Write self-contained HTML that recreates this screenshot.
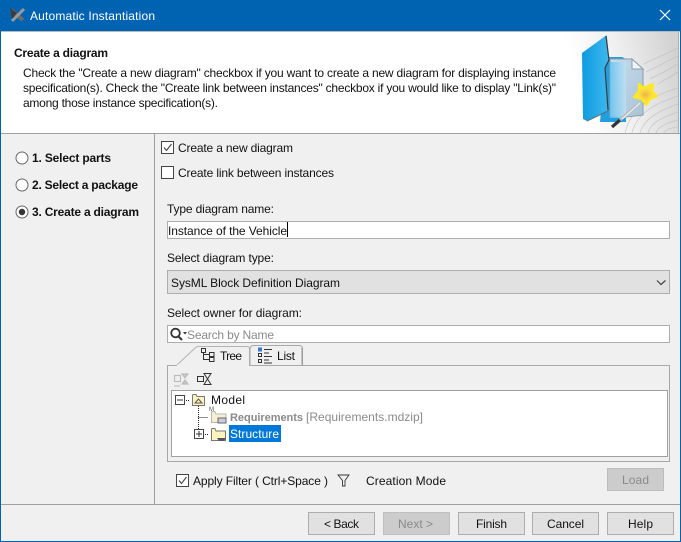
<!DOCTYPE html>
<html><head><meta charset="utf-8"><title>Automatic Instantiation</title>
<style>html,body{margin:0;padding:0;background:#f0f0f0;width:681px;height:542px;overflow:hidden}svg{display:block}
text{font-family:"Liberation Sans",sans-serif;font-size:12px;fill:#111}
.b{font-weight:bold}.g{fill:#8a8a8a}</style></head><body>
<svg width="681" height="542" viewBox="0 0 681 542" xmlns="http://www.w3.org/2000/svg">
<defs>
<linearGradient id="hg" x1="0.1" y1="0.5" x2="1" y2="0.3"><stop offset="0" stop-color="#fff"/><stop offset=".45" stop-color="#f0f0f0"/><stop offset="1" stop-color="#d2d2d2"/></linearGradient>
<linearGradient id="fg" x1="0" y1="0" x2="1" y2="0"><stop offset="0" stop-color="#0d9be0"/><stop offset="1" stop-color="#3fb8ee"/></linearGradient>
<linearGradient id="dg" x1="0" y1="0" x2="1" y2="1"><stop offset="0" stop-color="#c8dcea"/><stop offset="1" stop-color="#a9c4d8"/></linearGradient>
<linearGradient id="lg" x1="0" y1="0" x2="1" y2="0"><stop offset="0" stop-color="#5cc0f0"/><stop offset="1" stop-color="#bfe2f4"/></linearGradient>
<radialGradient id="st"><stop offset="0" stop-color="#f2b63c"/><stop offset=".6" stop-color="#fbe04a"/><stop offset="1" stop-color="#ffec20"/></radialGradient>
</defs>
<rect width="681" height="542" fill="#f0f0f0"/>
<!-- title bar -->
<rect width="681" height="31" fill="#0063b1"/>
<rect x="0" y="0" width="1" height="542" fill="#0063b1"/><rect x="680" y="0" width="1" height="542" fill="#0063b1"/><rect y="541" width="681" height="1" fill="#0063b1"/>
<path d="M11 10L23 20" stroke="#6d6d6d" stroke-width="4" fill="none"/>
<path d="M24 9L12 21" stroke="#9a9a9a" stroke-width="3" fill="none"/>
<path d="M10 8L17 13L12 19Z" fill="#3c3c3c"/>
<text x="30" y="20" style="fill:#fff" textLength="125">Automatic Instantiation</text>
<path d="M660 10L670 20M670 10L660 20" stroke="#fff" stroke-width="1.200" fill="none"/>
<!-- header -->
<rect x="1" y="31" width="679" height="1" fill="#b8b8b8"/>
<rect x="1" y="32" width="678" height="101" fill="#fff"/>
<rect x="565" y="32" width="113" height="101" fill="url(#hg)"/>
<g fill="none" stroke="#bdbdbd" stroke-width=".8" opacity=".7">
<path d="M625 133C630 112 645 98 678 88"/><path d="M632 133C636 116 650 105 678 96"/><path d="M640 133C643 121 655 112 678 104"/><path d="M648 133C650 124 660 118 678 112"/><path d="M656 133C658 127 666 123 678 120"/><path d="M664 133C665 130 670 128 678 127"/>
<path d="M644 64C656 58 668 53 678 48"/><path d="M646 72C658 66 668 61 678 56"/><path d="M650 79C660 74 670 69 678 64"/><path d="M658 84C664 80 672 76 678 72"/>
</g>
<rect x="678" y="32" width="1" height="101" fill="#b0b0b0"/>
<path d="M606 57H622L626 59V122L600 122Z" fill="#1f9fe0"/>
<path d="M610 59H632L643 69V115L626 117H610Z" fill="url(#dg)" stroke="#8d9dab"/>
<path d="M632 59L643 69H632Z" fill="#eef5fb" stroke="#8d9dab"/>
<path d="M610 62H626V118H610Z" fill="url(#lg)" opacity=".75"/>
<path d="M582 53L604 37Q607 34 607 37L609 60L605 68L608 110L587 121L583 119Z" fill="url(#fg)"/>
<path d="M606 36L609 60L605 68L608 110" fill="none" stroke="#3a3a3a" stroke-width="1.200"/>
<path d="M587 121L608 111" stroke="#5a7080" stroke-width="1" fill="none"/>
<path d="M612 127L620 120" stroke="#333" stroke-width="3.200"/><path d="M620 120L640 103" stroke="#b8b8b8" stroke-width="3"/><path d="M622 119L640 103" stroke="#eee" stroke-width="1.200"/>
<path d="M639 84L644 88L653 84L652 92L657 96L650 99L646 105L642 99L634 97L639 91Z" fill="url(#st)" stroke="#ffe818" stroke-width="2.200" stroke-linejoin="round"/>
<text class="b" x="14" y="57" textLength="94">Create a diagram</text>
<text x="23" y="77" textLength="533">Check the "Create a new diagram" checkbox if you want to create a new diagram for displaying instance</text>
<text x="23" y="92" textLength="533">specification(s). Check the "Create link between instances" checkbox if you would like to display "Link(s)"</text>
<text x="23" y="107" textLength="195">among those instance specification(s).</text>
<rect x="1" y="133" width="679" height="1" fill="#a0a0a0"/>
<rect x="154" y="134" width="1" height="370" fill="#a0a0a0"/>
<!-- steps -->
<g fill="#fff" stroke="#666"><circle cx="22" cy="158" r="6"/><circle cx="22" cy="185" r="6"/><circle cx="22" cy="212" r="6"/></g>
<circle cx="22" cy="212" r="3.200" fill="#333"/>
<text class="b" x="32" y="162" textLength="79">1. Select parts</text>
<text class="b" x="32" y="189" textLength="106">2. Select a package</text>
<text class="b" x="32" y="216" textLength="107">3. Create a diagram</text>
<!-- checkboxes -->
<rect x="161.500" y="141.500" width="12" height="12" fill="#fff" stroke="#444"/>
<path d="M164 147.500L166.500 150.500L171.500 144" fill="none" stroke="#444" stroke-width="1.100"/>
<text x="178" y="152" textLength="115">Create a new diagram</text>
<rect x="161.500" y="166.500" width="12" height="12" fill="#fff" stroke="#444"/>
<text x="178" y="177" textLength="156">Create link between instances</text>
<!-- name -->
<text x="167" y="213" textLength="107">Type diagram name:</text>
<rect x="167.500" y="221.500" width="502" height="17" fill="#fff" stroke="#adadad"/>
<text x="168" y="235" textLength="119">Instance of the Vehicle</text>
<rect x="287" y="222" width="1" height="15" fill="#000"/>
<!-- type -->
<text x="167" y="262" textLength="107">Select diagram type:</text>
<rect x="167.500" y="270.500" width="502" height="23" fill="#e1e1e1" stroke="#adadad"/>
<text x="171" y="287" textLength="169">SysML Block Definition Diagram</text>
<path d="M657 280.500L661 284.500L665.500 280.500" fill="none" stroke="#444" stroke-width="1.200"/>
<!-- owner -->
<text x="167" y="317" textLength="135">Select owner for diagram:</text>
<rect x="167.500" y="325.500" width="502" height="17" fill="#fff" stroke="#adadad"/>
<circle cx="175.500" cy="333" r="4.300" fill="none" stroke="#333" stroke-width="1.800"/>
<path d="M178.500 336.500L182 340" stroke="#333" stroke-width="2"/><path d="M183 332H187L185 334.500Z" fill="#333"/>
<text x="187" y="339" class="g" textLength="87">Search by Name</text>
<!-- tabs -->
<rect x="167.500" y="365.500" width="502" height="96" fill="#f0f0f0" stroke="#a8a8a8"/>
<path d="M176.500 365.500L195 348Q196.500 346.500 198 346.500H247Q249.500 346.500 249.500 349V365.500" fill="#f0f0f0" stroke="#b4b4b4"/>
<path d="M250 365.500V349Q250 345.500 254 345.500H299Q302.500 345.500 302.500 349V365.500Z" fill="#f0f0f0" stroke="#a8a8a8"/>
<rect x="301.500" y="348" width="1.500" height="17" fill="#9c9c9c"/>
<rect x="177" y="364.500" width="72" height="2" fill="#f0f0f0"/>
<g fill="none" stroke="#333"><rect x="201.500" y="348.500" width="4" height="4"/><rect x="209.500" y="352.500" width="4.500" height="4"/><rect x="209.500" y="357.500" width="4.500" height="4"/><path d="M203.500 353V359.500H209M203.500 354.500H209"/></g>
<text x="220" y="360" textLength="22">Tree</text>
<g fill="none" stroke="#333"><rect x="258.500" y="353.500" width="3" height="3"/><rect x="258.500" y="359.500" width="3" height="3"/><path d="M264 349.500H272M264 353H269M264 356.500H272M264 360H269M264 363H272"/></g>
<rect x="258" y="347.500" width="4" height="4" fill="#3a78c8"/>
<text x="277" y="360" textLength="18">List</text>
<!-- tree toolbar -->
<g fill="none" stroke="#bdbdbd" stroke-width="1.200"><rect x="174.500" y="375.500" width="6" height="6"/><path d="M182 374H188L185 378ZM182 384H188L185 380Z" fill="#c4c4c4"/><path d="M174 386H180"/></g>
<g fill="none" stroke="#333"><rect x="197.500" y="376.500" width="6" height="5"/><path d="M204 373.500H211L207.500 379L211 384.500H204L207.500 379Z"/></g>
<!-- tree -->
<rect x="171.500" y="390.500" width="496" height="66" fill="#fff" stroke="#a0a0a0"/>
<rect x="175.500" y="395.500" width="9" height="9" fill="#fff" stroke="#444"/><path d="M177 400H183" stroke="#333"/>
<path d="M186 400.500H190M198.500 406V429M198.500 417.500H208M205 434.500H209" stroke="#222" stroke-dasharray="1 1" fill="none"/>
<path d="M192.500 395.500V405.500H204.500V396.500H197L196 394.500H193Z" fill="#fdf3c0" stroke="#777"/>
<path d="M195 403H202L198.500 399Z" fill="none" stroke="#555"/>
<text x="211" y="404" textLength="34">Model</text>
<path d="M211.500 412.500V422.500H226V414H216L215 411.500H212Z" fill="#f7efd2" stroke="#b5b5b5"/>
<rect x="218" y="418" width="8" height="5" fill="#c9cdd8" stroke="#667"/>
<text x="209" y="411" style="font-size:6px;fill:#555">M</text>
<text x="230" y="421" class="g" textLength="73" style="font-weight:bold;font-size:11px">Requirements</text>
<text x="306" y="421" class="g" textLength="117">[Requirements.mdzip]</text>
<rect x="194.500" y="429.500" width="9" height="9" fill="#fff" stroke="#444"/><path d="M196 434H202M199 431V437" stroke="#333"/>
<path d="M211.500 429.500V440.500H225.500V431H216L215 428.500H212Z" fill="#fdf3c0" stroke="#777"/>
<path d="M217 438H226L224 441H219Z" fill="#556"/>
<rect x="229" y="425" width="52" height="17" fill="#0078d7"/>
<text x="230" y="438" style="fill:#fff" textLength="49">Structure</text>
<!-- filter row -->
<rect x="176.500" y="474.500" width="12" height="12" fill="#fff" stroke="#444"/>
<path d="M179 480.500L181.500 483.500L186.500 477" fill="none" stroke="#444" stroke-width="1.100"/>
<text x="193" y="485" textLength="135">Apply Filter ( Ctrl+Space )</text>
<path d="M338 475H349L345 480.500V486H342.500V480.500Z" fill="none" stroke="#333" stroke-width=".9"/>
<text x="366" y="485" textLength="80">Creation Mode</text>
<rect x="607.500" y="468.500" width="56" height="22" fill="#cccccc" stroke="#bdbdbd"/>
<text x="622" y="484" class="g" textLength="27">Load</text>
<!-- bottom -->
<rect x="1" y="504" width="679" height="1" fill="#a0a0a0"/>
<g fill="#e1e1e1" stroke="#adadad">
<rect x="308.500" y="512.500" width="66" height="22"/>
<rect x="383.500" y="512.500" width="66" height="22" fill="#cccccc" stroke="#bfbfbf"/>
<rect x="458.500" y="512.500" width="66" height="22"/>
<rect x="532.500" y="512.500" width="66" height="22"/>
<rect x="607.500" y="512.500" width="66" height="22"/>
</g>
<text x="324" y="528" textLength="35">&lt; Back</text>
<text x="398" y="528" class="g" textLength="35">Next &gt;</text>
<text x="476" y="528" textLength="31">Finish</text>
<text x="547" y="528" textLength="37">Cancel</text>
<text x="628" y="528" textLength="25">Help</text>
</svg>
</body></html>
